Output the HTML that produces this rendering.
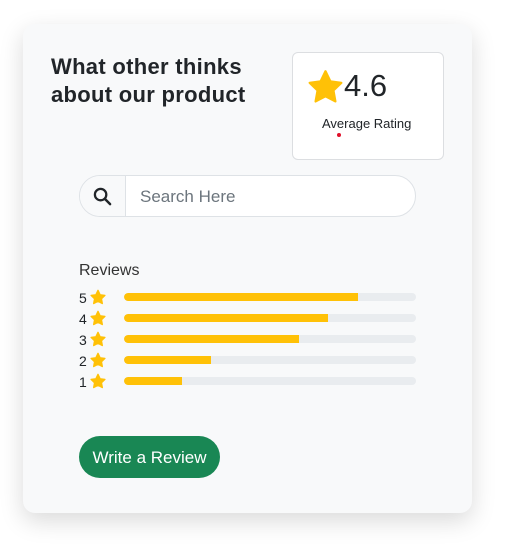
<!DOCTYPE html>
<html><head><style>
*{box-sizing:border-box;margin:0;padding:0}
body{width:512px;height:548px;background:#fff;font-family:"Liberation Sans",sans-serif;position:relative;overflow:hidden;color:#212529}
.card{position:absolute;left:23px;top:24px;width:449px;height:489px;background:#f8f9fa;border-radius:12px;box-shadow:0 8px 24px rgba(0,0,0,.15)}
h2{position:absolute;left:51px;top:53px;font-size:22px;line-height:28px;font-weight:bold;color:#212529;letter-spacing:0.3px}
.rb{position:absolute;left:292px;top:52px;width:152px;height:108px;background:#fff;border:1px solid #dcdee1;border-radius:6px}
.num{position:absolute;left:344px;top:68px;font-size:31px;color:#212529}
.avg{position:absolute;left:322px;top:116px;font-size:13px}
.dot{position:absolute;left:337px;top:133px;width:4px;height:4px;border-radius:50%;background:#e0102a}
.search{position:absolute;left:79px;top:175px;width:337px;height:42px;border:1px solid #dee2e6;border-radius:21px;background:#fff;overflow:hidden}
.search .ic{position:absolute;left:0;top:0;width:46px;height:40px;background:#f8f9fa;border-right:1px solid #dee2e6}
.search span{position:absolute;left:60px;top:11px;font-size:17px;color:#6c757d}
.rev{position:absolute;left:79px;top:262px;font-size:16px;color:#333}
.row{position:absolute;left:79px;font-size:14px;height:16px}
.row b{font-weight:normal;position:absolute;left:0;top:0}
.row svg{position:absolute;left:11px;top:-1px}
.bar{position:absolute;left:124px;width:292px;height:8px;border-radius:4px;background:#e9ecef;overflow:hidden}
.bar i{display:block;height:8px;background:#ffc107;border-radius:4px 0 0 4px}
.btn{position:absolute;left:79px;top:436px;width:141px;height:42px;border-radius:21px;background:#198754;color:#fff;font-size:17px;line-height:44px;text-align:center}
</style></head><body>
<div class="card"></div>
<h2>What other thinks<br>about our product</h2>
<div class="rb"></div>
<svg style="position:absolute;left:307px;top:69px" width="37" height="35" viewBox="0 0 24 23"><path fill="#ffc107" stroke="#ffc107" stroke-width="1.5" stroke-linejoin="round" d="M12 1.5l3.2 6.6 7.2 1-5.2 5 1.3 7.2L12 17.9l-6.5 3.4 1.3-7.2-5.2-5 7.2-1z"/></svg>
<div class="num">4.6</div>
<div class="avg">Average Rating</div>
<div class="dot"></div>
<div class="search"><div class="ic"><svg style="position:absolute;left:13px;top:11px" width="19" height="19" viewBox="0 0 20 20"><circle cx="8" cy="8" r="6" fill="none" stroke="#212529" stroke-width="2.4"/><path d="M12.5 12.5l5.5 5.5" stroke="#212529" stroke-width="2.6" stroke-linecap="round"/></svg></div><span>Search Here</span></div>
<div class="rev">Reviews</div>
<div class="row" style="top:290px"><b>5</b><svg width="16" height="16" viewBox="0 0 24 23"><path fill="#ffc107" stroke="#ffc107" stroke-width="2" stroke-linejoin="round" d="M12 1.5l3.2 6.6 7.2 1-5.2 5 1.3 7.2L12 17.9l-6.5 3.4 1.3-7.2-5.2-5 7.2-1z"/></svg></div>
<div class="row" style="top:311px"><b>4</b><svg width="16" height="16" viewBox="0 0 24 23"><path fill="#ffc107" stroke="#ffc107" stroke-width="2" stroke-linejoin="round" d="M12 1.5l3.2 6.6 7.2 1-5.2 5 1.3 7.2L12 17.9l-6.5 3.4 1.3-7.2-5.2-5 7.2-1z"/></svg></div>
<div class="row" style="top:332px"><b>3</b><svg width="16" height="16" viewBox="0 0 24 23"><path fill="#ffc107" stroke="#ffc107" stroke-width="2" stroke-linejoin="round" d="M12 1.5l3.2 6.6 7.2 1-5.2 5 1.3 7.2L12 17.9l-6.5 3.4 1.3-7.2-5.2-5 7.2-1z"/></svg></div>
<div class="row" style="top:353px"><b>2</b><svg width="16" height="16" viewBox="0 0 24 23"><path fill="#ffc107" stroke="#ffc107" stroke-width="2" stroke-linejoin="round" d="M12 1.5l3.2 6.6 7.2 1-5.2 5 1.3 7.2L12 17.9l-6.5 3.4 1.3-7.2-5.2-5 7.2-1z"/></svg></div>
<div class="row" style="top:374px"><b>1</b><svg width="16" height="16" viewBox="0 0 24 23"><path fill="#ffc107" stroke="#ffc107" stroke-width="2" stroke-linejoin="round" d="M12 1.5l3.2 6.6 7.2 1-5.2 5 1.3 7.2L12 17.9l-6.5 3.4 1.3-7.2-5.2-5 7.2-1z"/></svg></div>
<div class="bar" style="top:293px"><i style="width:234px"></i></div>
<div class="bar" style="top:314px"><i style="width:204px"></i></div>
<div class="bar" style="top:335px"><i style="width:175px"></i></div>
<div class="bar" style="top:356px"><i style="width:87px"></i></div>
<div class="bar" style="top:377px"><i style="width:58px"></i></div>
<div class="btn">Write a Review</div>
</body></html>
